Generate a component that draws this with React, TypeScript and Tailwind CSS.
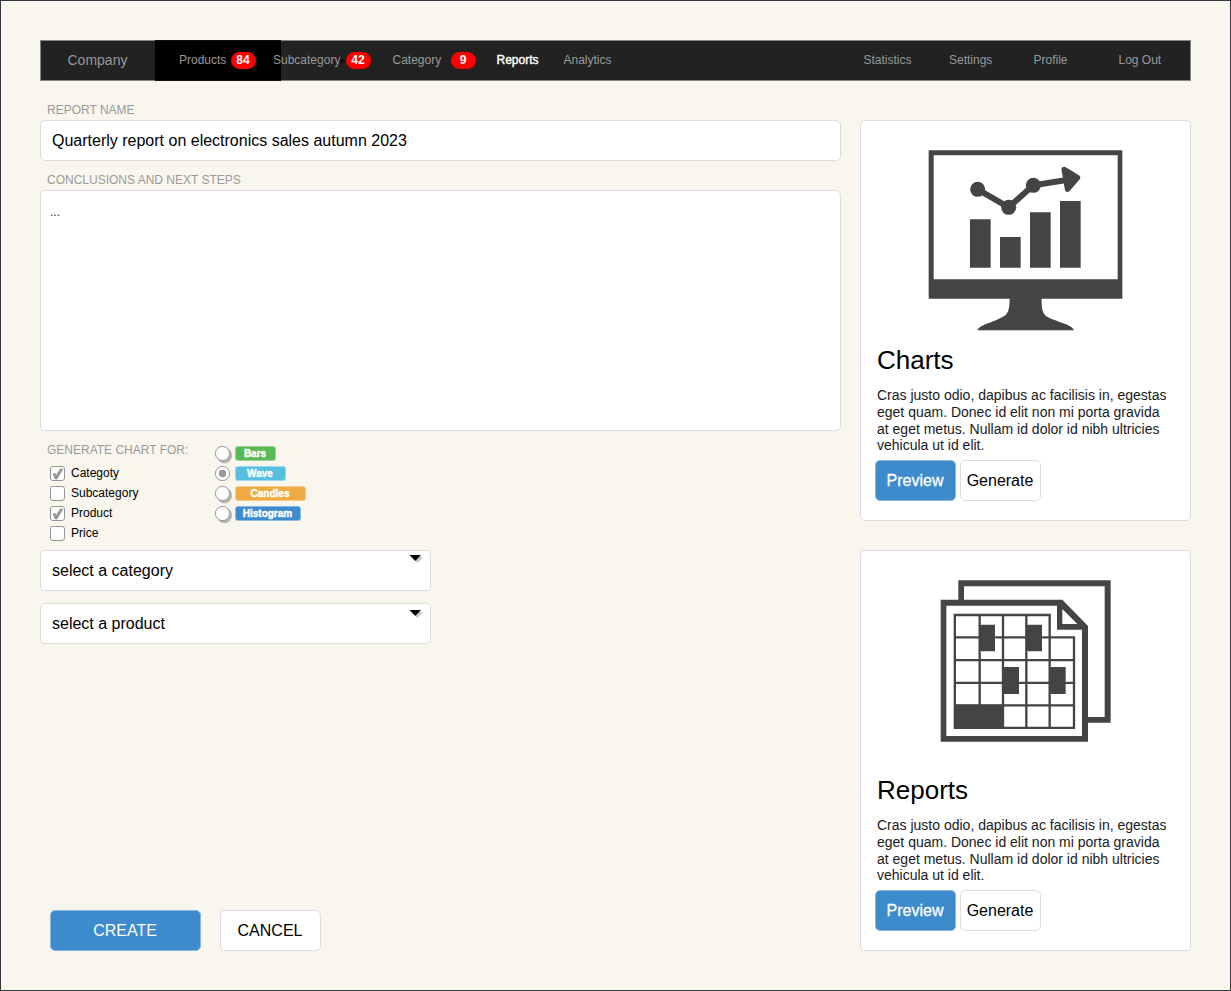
import type { ReactNode } from "react";

const panel = "rounded-[5px] border border-[#dddddd] bg-white";

function Count({ children, className }: { children: ReactNode; className: string }) {
  return (
    <span className={`flex h-[17px] w-[25px] items-center justify-center rounded-full bg-[#ff0000] pb-px pr-px text-[12px] font-bold text-white ${className}`}>
      {children}
    </span>
  );
}

function Header() {
  return (
    <header className="flex h-[41px] w-[1151px] border border-[#858582] bg-[#222222] text-[12px] leading-[38px] text-[#999999]">
      <a className="w-[114px] pl-[26.5px] text-[14px]">Company</a>
      <div className="-my-px flex h-[41px] w-[126px] items-center border-y border-[#0f0f0f] bg-black pl-[24px]">
        <span className="-mt-px h-[38px] w-[52px]">Products</span>
        <Count className="">84</Count>
      </div>
      <div className="relative -ml-[8px] flex h-[39px] w-[119.5px] items-center">
        <span className="-mt-px h-[38px] w-[67px]">Subcategory</span>
        <svg className="h-2 w-[6px]" viewBox="0 0 6 8"><path d="M0 1 6 4 0 7Z" fill="#101010" /></svg>
        <Count className="">42</Count>
      </div>
      <div className="flex h-[39px] w-[104px] items-center">
        <span className="-mt-px h-[38px] w-[58.5px]">Category</span>
        <Count className="">9</Count>
      </div>
      <a className="w-[67px] text-white [-webkit-text-stroke:0.4px_white]">Reports</a>
      <a className="w-[300px]">Analytics</a>
      <a className="w-[85.5px]">Statistics</a>
      <a className="w-[84.5px]">Settings</a>
      <a className="w-[85px]">Profile</a>
      <a>Log Out</a>
    </header>
  );
}

function MonitorIcon() {
  return (
    <svg className="ml-[39px] mt-[9px] h-[220px] w-[250px] shrink-0" viewBox="0 0 750 660" fill="#434446">
      <path fillRule="evenodd" d="M86 61H667V506H86ZM101 76V448H653V76Z" />
      <path d="M329 500H425C424 535 427 550 441 560C465 574 520 584 522 601H232C236 584 288 575 314 557C327 547 329 530 329 500Z" />
      <path d="M210 268H272V413H210ZM300 321H362V413H300ZM390 247H452V413H390ZM480 213H542V413H480Z" />
      <path d="M233 178 326 232 400 166 500 150" fill="none" stroke="#434446" strokeWidth="18" />
      <circle cx="233" cy="178" r="22.5" />
      <circle cx="326" cy="232" r="22.5" />
      <circle cx="400" cy="166" r="22.5" />
      <path d="M493 119 532 143 503 177Z" stroke="#434446" strokeWidth="17" strokeLinejoin="round" />
    </svg>
  );
}

function SheetIcon() {
  return (
    <svg className="ml-[59px] mt-[14px] h-[190px] w-[220px] shrink-0" viewBox="0 0 660 570" fill="#434446">
      <path fillRule="evenodd" d="M115 46H572V473H115ZM132 64V456H554V64Z" />
      <path d="M62 104H427L504 183V530H62Z" />
      <path fill="#fff" d="M79 122H411V194H486V513H79ZM427 132V177H472Z" />
      <path
        d="M104.500 150H389V217H462V488.500H104.500ZM104 217H389M104 285.500H462M104 353.500H462M104 421H462M179 150V421M249 150V488M319 150V488M389 217V488"
        fill="none"
        stroke="#434446"
        strokeWidth="7"
      />
      <path fill="#fff" d="M182 178H228V214H182ZM182 220H228V261H182ZM322 178H369V214H322ZM322 220H369V261H322ZM252 304H300V350H252ZM252 357H300V389H252ZM392 304H440V350H392ZM392 357H440V389H392Z" />
      <path d="M179 179H225V259H179ZM319 179H366V259H319ZM249 306H297V387H249ZM389 306H437V387H389ZM102 419H252V491H102Z" />
    </svg>
  );
}

function Card({ title, icon }: { title: string; icon: ReactNode }) {
  return (
    <section className={`flex h-[401px] w-[331px] flex-col ${panel}`}>
      <div className="flex h-[221px] items-start">{icon}</div>
      <h2 className="pl-4 text-[26px] leading-[36px]">{title}</h2>
      <p className="mt-[9px] whitespace-nowrap pl-4 text-[14px] leading-[16.8px] text-[#1a1a1a]">
        Cras justo odio, dapibus ac facilisis in, egestas
        <br />
        eget quam. Donec id elit non mi porta gravida
        <br />
        at eget metus. Nullam id dolor id nibh ultricies
        <br />
        vehicula ut id elit.
      </p>
      <div className="ml-[14px] mt-[6px] flex gap-[4px] text-[16px]">
        <button className="h-[41px] w-[81px] rounded-[5px] border border-[#8bb7da] bg-[#3d8bcd] pr-px text-white [-webkit-text-stroke:0.3px_white]">Preview</button>
        <button className={`h-[41px] w-[81px] pr-px ${panel}`}>Generate</button>
      </div>
    </section>
  );
}

function Check({ label, checked }: { label: string; checked?: boolean }) {
  return (
    <label className="flex h-5 items-center text-[12px]">
      <svg className="h-[15px] w-[15px] overflow-visible" viewBox="0 0 15 15">
        <rect x="0.5" y="0.5" width="14" height="14" rx="2.5" fill="#fff" stroke="#94949a" />
        {checked && <path d="M2.500 7.500 5 7 6.300 8.800 10.300 2.300 12.800 2.800 12.500 4.500 7 13.500 4.800 13.300Z" fill="#999" />}
      </svg>
      <span className="-mt-px ml-[6px]">{label}</span>
    </label>
  );
}

function Radio({ label, color, checked }: { label: string; color: string; checked?: boolean }) {
  return (
    <label className="flex h-5 items-center">
      <svg className="h-[15px] w-[15px] overflow-visible" viewBox="0 0 15 15">
        {!checked && <circle cx="9.5" cy="9.5" r="7.7" fill="#b9b6ae" />}
        <circle cx="7.5" cy="7.5" r="7.1" fill="#fff" stroke="#94949a" />
        {checked && <circle cx="7.5" cy="7.5" r="3.7" fill="#999" />}
      </svg>
      <span className={`ml-[5px] flex h-[15px] items-center justify-center rounded-[3px] border border-white/40 bg-clip-border pr-px text-[10px] font-bold text-white [-webkit-text-stroke:0.4px_white] ${color}`}>
        {label}
      </span>
    </label>
  );
}

function Select({ label, arrow }: { label: string; arrow: string }) {
  return (
    <div className={`flex h-[41px] w-[391px] justify-between pl-[11px] text-[16px] leading-[39px] ${panel}`}>
      <span>{label}</span>
      <svg className={`mr-[7px] h-[8px] w-[14px] ${arrow}`} viewBox="0 0 14 8">
        <path d="M3 2H14L8.500 8Z" fill="#c4c4c4" />
        <path d="M0.500 0H12L6.200 6Z" fill="#000" />
      </svg>
    </div>
  );
}

export default function App() {
  return (
    <div className="h-[991px] w-[1231px] overflow-hidden border border-[#343840] bg-[#f9f7ed] px-[39px] pt-[39px] font-['Liberation_Sans',Arial,sans-serif] text-black">
      <Header />
      <div className="mt-[39px] flex h-[831px] w-[1151px] justify-between">
        <main className="flex w-[801px] flex-col">
          <div className="-mt-[19px] h-[19px] pl-[7px] text-[12px] leading-[18px] text-[#999999]">REPORT NAME</div>
          <div className={`h-[41px] pl-[11px] text-[16px] leading-[39px] ${panel}`}>Quarterly report on electronics sales autumn 2023</div>
          <div className="h-[29px] pl-[7px] pt-[10px] text-[12px] leading-[18px] text-[#999999]">CONCLUSIONS AND NEXT STEPS</div>
          <div className={`h-[241px] pl-[9px] pt-[14px] text-[12px] leading-[14px] text-[#333] ${panel}`}>...</div>
          <div className="flex h-[119px]">
            <div className="w-[174px] pt-[10px]">
              <div className="h-[22px] pl-[7px] text-[12px] leading-[18px] text-[#999999]">GENERATE CHART FOR:</div>
              <div className="pl-[10px]">
                <Check label="Categoty" checked />
                <Check label="Subcategory" />
                <Check label="Product" checked />
                <Check label="Price" />
              </div>
            </div>
            <div className="pl-px pt-[12px]">
              <Radio label="Bars" color="w-[41px] bg-[#5ab957]" />
              <Radio label="Wave" color="w-[51px] bg-[#55bfdf]" checked />
              <Radio label="Candles" color="w-[71px] bg-[#efab42]" />
              <Radio label="Histogram" color="w-[66px] bg-[#3d8bcd]" />
            </div>
          </div>
          <div className="flex flex-col gap-3">
            <Select label="select a category" arrow="mt-[4px]" />
            <Select label="select a product" arrow="mt-[6px]" />
          </div>
          <div className="ml-[10px] mt-auto flex gap-[19px] text-[16px]">
            <button className="h-[41px] w-[151px] rounded-[5px] border border-[#8bb7da] bg-[#3d8bcd] pr-px text-white">CREATE</button>
            <button className={`h-[41px] w-[101px] pr-px ${panel}`}>CANCEL</button>
          </div>
        </main>
        <aside className="flex flex-col gap-[29px]">
          <Card title="Charts" icon={<MonitorIcon />} />
          <Card title="Reports" icon={<SheetIcon />} />
        </aside>
      </div>
    </div>
  );
}
